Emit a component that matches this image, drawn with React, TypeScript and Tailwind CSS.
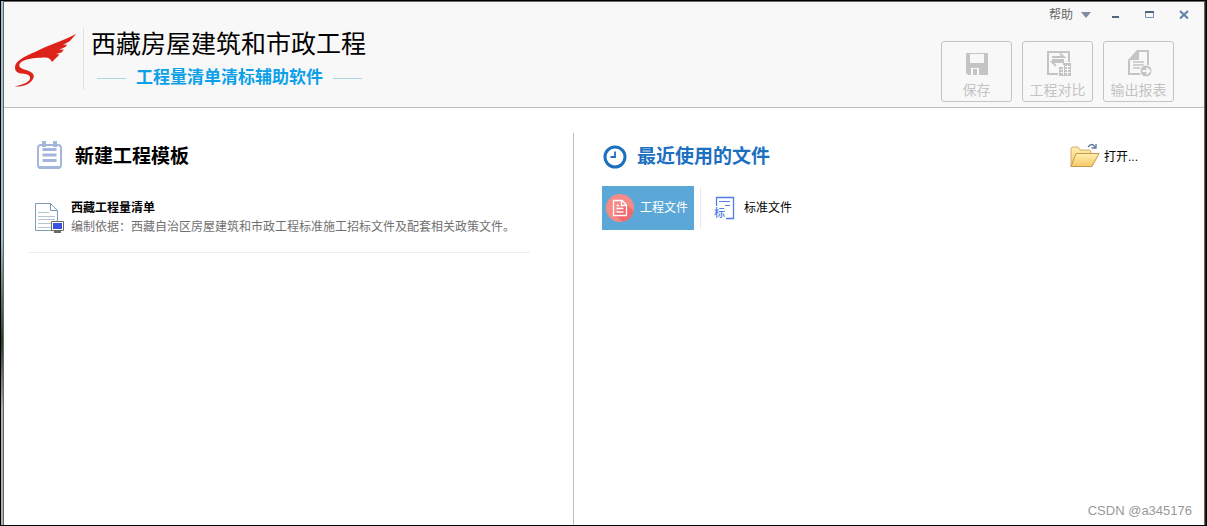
import React, { useState } from 'react';
import clsx from 'clsx';

function BrandMark() {
  return (
    <svg className="w-16 h-14 shrink-0" viewBox="0 0 64 56" fill="#dd2219" aria-hidden="true">
      <path d="M63 2C59 4 55 6 50 8C45 10 40 12 35 14C30 16 26 18 22 20C17 22 12 24 8 27C4 30 2 32 2 35C2 39 4 41 8 41.500C12 42 16 42 17 45C18 49 13 52 1.500 54.500C11 55 16 52 18.500 49C21 46 22 43 18.500 40.500C15 38 11 38 8 36C5 34 6 31 10 29C16 26 24 26 31 25.500C35 25 38 27 39 30L43 26L46.500 22.500L43 22L48.500 20.500L51 17.500L46 18L53 14.500L54 12.500L50 13L57 9Z" />
    </svg>
  );
}

function SaveIcon() {
  return (
    <svg className="w-8 h-8" viewBox="0 0 32 32" aria-hidden="true">
      <path fill="#c4c4c4" d="M5 5H27V27H7L5 25Z" />
      <path fill="#f8f8f8" d="M9 6H23V15H9ZM10 20H22V27H10Z" />
      <path fill="#c4c4c4" d="M12 21H16V27H12ZM18 20H22V27H18Z" />
    </svg>
  );
}

function CompareIcon() {
  return (
    <svg className="w-8 h-8" viewBox="0 0 32 32" fill="none" stroke="#c4c4c4" strokeWidth="2" aria-hidden="true">
      <path d="M27 14V4H6V26H16" />
      <path d="M10 9H22L18 5.500M22 14H10L14 18M10 12H22" strokeWidth="1.800" />
      <path fill="#c4c4c4" stroke="none" d="M17 19H21V15H29V28H17Z" />
      <path stroke="#f8f8f8" strokeWidth="1" d="M21.500 17V27M18.500 21.500H20.500M18.500 24.500H20.500M23 18.500H28M23 21.500H28M23 24.500H28M25.500 17V27" />
    </svg>
  );
}

function ReportIcon() {
  return (
    <svg className="w-8 h-8" viewBox="0 0 32 32" fill="none" stroke="#c4c4c4" strokeWidth="2" aria-hidden="true">
      <path d="M15 3H25V18M17 26H6V12" />
      <path fill="#c4c4c4" stroke="none" d="M14 2H16V12H5Z" />
      <path strokeWidth="1.500" d="M10 14H21M10 17H21M10 20H17" />
      <circle cx="23" cy="23" r="6" fill="#c4c4c4" stroke="#f8f8f8" strokeWidth="1" />
      <path stroke="#f8f8f8" strokeWidth="2" d="M19.500 23H26M23.500 20L26.500 23L23.500 26" />
    </svg>
  );
}

function NotepadIcon() {
  return (
    <svg className="w-7 h-8" viewBox="0 0 28 32" fill="none" stroke="#a4b6dc" aria-hidden="true">
      <rect x="3" y="4" width="23" height="23" rx="3" strokeWidth="2" />
      <path strokeWidth="3" d="M4 26.500H25M7.500 8.500H21.500M7.500 14H21.500M7.500 19.500H21.500" />
      <path strokeWidth="4" d="M9 0V6M20 0V6" />
    </svg>
  );
}

function TemplateIcon() {
  return (
    <svg className="w-8 h-8" viewBox="0 0 32 32" fill="none" aria-hidden="true">
      <path stroke="#7f9db4" fill="#fff" d="M2.500 2.500H17.500L24.500 9.500V29.500H2.500Z" />
      <path stroke="#7f9db4" d="M17.500 2.500V9.500H24.500" />
      <path stroke="#b4c6d2" d="M5 11.500H16M5 15.500H22M5 18.500H22M5 22.500H19M5 26.500H19" />
      <path fill="#fff" stroke="#6a6a6a" d="M18.500 20.500H30.500V29.500H18.500Z" />
      <path fill="#3b51e2" d="M20 22H29V28H20Z" />
      <path stroke="#6a6a6a" strokeWidth="2" d="M24.500 29V31M21 31H28" />
    </svg>
  );
}

function ClockIcon() {
  return (
    <svg className="w-6 h-6" viewBox="0 0 24 24" fill="none" stroke="#1d6fc0" aria-hidden="true">
      <circle cx="12" cy="12" r="10" strokeWidth="3" />
      <path strokeWidth="1.800" d="M12 6.500V12H7.500" />
    </svg>
  );
}

function ProjectFileIcon() {
  return (
    <svg className="w-7 h-7" viewBox="0 0 28 28" fill="none" aria-hidden="true">
      <circle cx="14" cy="14" r="14" fill="#f58a88" />
      <path fill="#ee696c" d="M20 10L27.500 17A14 14 0 0 1 17 27.700L8 21Z" />
      <path stroke="#fff" strokeWidth="1.300" d="M7.500 6.500H16L20.500 11V21.500H7.500ZM15.500 6.500V11.500H20.500M10.500 11.500H13M10.500 14.500H17.500M10.500 18H17.500" />
    </svg>
  );
}

function StandardFileIcon() {
  return (
    <svg className="w-6 h-6" viewBox="0 0 24 24" fill="none" stroke="#4d7fe6" aria-hidden="true">
      <path strokeWidth="1.300" d="M4.500 10V1.500H21.500V22.500H14" />
      <path d="M7 5.500H18M13 9.500H18" />
      <text x="2" y="21" fontSize="11" fill="#4d7fe6" stroke="none" className="font-['Noto_Sans_CJK_SC',sans-serif] font-medium">标</text>
    </svg>
  );
}

function FolderIcon() {
  return (
    <svg className="w-8 h-7" viewBox="0 0 32 28" fill="none" aria-hidden="true">
      <defs>
        <linearGradient id="folder" x1="0" y1="0" x2="0" y2="1">
          <stop offset="0" stopColor="#fff0b0" />
          <stop offset="1" stopColor="#f5c967" />
        </linearGradient>
      </defs>
      <path fill="url(#folder)" stroke="#d3ab6c" d="M2 23.500V6Q2 4 4 4H9L11 7H20Q22 7 22 9V23.500Z" />
      <path fill="url(#folder)" stroke="#c79650" d="M2 23.500L7 10.500H30L23 23.500Z" />
      <path stroke="#587795" strokeWidth="1.300" d="M19 4Q23 -1 26 4M27 1V5H22.500" />
    </svg>
  );
}

const tools = [
  { label: '保存', Icon: SaveIcon },
  { label: '工程对比', Icon: CompareIcon },
  { label: '输出报表', Icon: ReportIcon },
];

function TitleBar() {
  return (
    <header className="flex justify-between h-[106px] shrink-0 bg-[#f8f8f8] border-b border-[#bebebe]">
      <div className="flex items-start pt-[26px] pl-[9px]">
        <div className="flex pt-1 pr-[6px] h-[62px] border-r border-[#e0e0e0]">
          <BrandMark />
        </div>
        <div className="pl-[7px]">
          <h1 className="text-[25px] leading-8 font-normal text-black whitespace-nowrap">西藏房屋建筑和市政工程</h1>
          <div className="flex items-center gap-[10px] pl-[6px] pt-[2px]">
            <span className="h-px w-[29px] bg-[#a9d6e5]" />
            <h2 className="text-[17px] leading-8 font-bold text-[#0ba0e8] whitespace-nowrap">工程量清单清标辅助软件</h2>
            <span className="h-px w-[29px] bg-[#a9d6e5]" />
          </div>
        </div>
      </div>

      <div className="flex flex-col items-end pr-[15px]">
        <div className="flex items-center h-[26px] text-xs text-[#666]">
          <button className="flex items-center gap-2">
            帮助
            <svg className="w-[10px] h-[6px]" viewBox="0 0 10 6" fill="#7f8ba0"><path d="M0 0H10L5 6Z" /></svg>
          </button>
          <button className="ml-5" aria-label="最小化">
            <svg className="w-[10px] h-[10px]" viewBox="0 0 10 10"><path fill="#53647d" d="M1 6H8V8H1Z" /></svg>
          </button>
          <button className="ml-6" aria-label="最大化">
            <svg className="w-[10px] h-[10px]" viewBox="0 0 10 10" fill="none"><path stroke="#7890bd" d="M.5 1.500H8.500V7.500H.5Z" /><path fill="#53647d" d="M0 1H9V3H0Z" /></svg>
          </button>
          <button className="ml-6" aria-label="关闭">
            <svg className="w-[10px] h-[10px]" viewBox="0 0 10 10" stroke="#617eab" strokeWidth="2"><path d="M1 1L9 8.500M9 1L1 8.500" /></svg>
          </button>
        </div>
        <div className="flex gap-[10px] pt-[13px] pr-[15px]">
          {tools.map(({ label, Icon }) => (
            <button key={label} disabled className="flex flex-col items-center w-[71px] h-[61px] pt-[6px] border border-[#c4c4c4] rounded-[3px] text-sm leading-5 text-[#c4c4c4]">
              <Icon />
              {label}
            </button>
          ))}
        </div>
      </div>
    </header>
  );
}

function TemplatePanel() {
  return (
    <section className="w-[570px] shrink-0 pl-[25px] pr-[43px] border-r border-[#bebebe]">
      <div className="flex items-center gap-3 h-12 pl-[6px]">
        <NotepadIcon />
        <h2 className="text-[19px] leading-6 font-bold text-black">新建工程模板</h2>
      </div>
      <a href="#template" className="flex items-center gap-[6px] h-[72px] pl-1 border-b border-[#ececec]">
        <TemplateIcon />
        <span className="pt-[2px] text-xs leading-[19px] text-[#707070] whitespace-nowrap">
          <strong className="block font-bold text-black">西藏工程量清单</strong>
          编制依据：西藏自治区房屋建筑和市政工程标准施工招标文件及配套相关政策文件。
        </span>
      </a>
    </section>
  );
}

function RecentPanel() {
  const [tab, setTab] = useState('project');
  return (
    <section className="flex-1 pl-7 pr-[66px]">
      <div className="flex items-center justify-between h-12">
        <h2 className="flex items-center gap-[10px] pl-px text-[19px] leading-6 font-bold text-[#1d6fc0]">
          <ClockIcon />
          最近使用的文件
        </h2>
        <button className="flex items-center gap-[3px] text-xs text-black">
          <FolderIcon />
          打开...
        </button>
      </div>
      <div className="flex items-center mt-[5px] text-xs">
        <button onClick={() => setTab('project')} className={clsx('flex items-center gap-[6px] h-11 pl-1 pr-[6px]', tab === 'project' ? 'bg-[#5ba8d8] text-white' : 'text-black')}>
          <ProjectFileIcon />
          工程文件
        </button>
        <span className="w-px h-10 mx-[6px] bg-[#e8e8e8]" />
        <button onClick={() => setTab('standard')} className={clsx('flex items-center gap-2 h-11 px-[5px]', tab === 'standard' ? 'bg-[#5ba8d8] text-white' : 'text-black')}>
          <StandardFileIcon />
          标准文件
        </button>
      </div>
    </section>
  );
}

export default function App() {
  return (
    <div className="flex min-h-screen border border-black bg-white font-['Liberation_Sans','Noto_Sans_CJK_SC',sans-serif]">
      <div className="w-[2px] shrink-0 bg-linear-to-b from-[#9fc4d0] from-45% via-[#2b3a28] via-65% to-[#aeb0b8] to-78%" />
      <div className="relative flex flex-col flex-1 border-t border-x border-[#666] bg-white">
        <TitleBar />
        <main className="flex flex-1 pt-[25px]">
          <TemplatePanel />
          <RecentPanel />
        </main>
        <span className="absolute right-3 bottom-1 text-[13px] leading-5 text-[#999]">CSDN @a345176</span>
      </div>
      <div className="w-px shrink-0 bg-[#222]" />
    </div>
  );
}
